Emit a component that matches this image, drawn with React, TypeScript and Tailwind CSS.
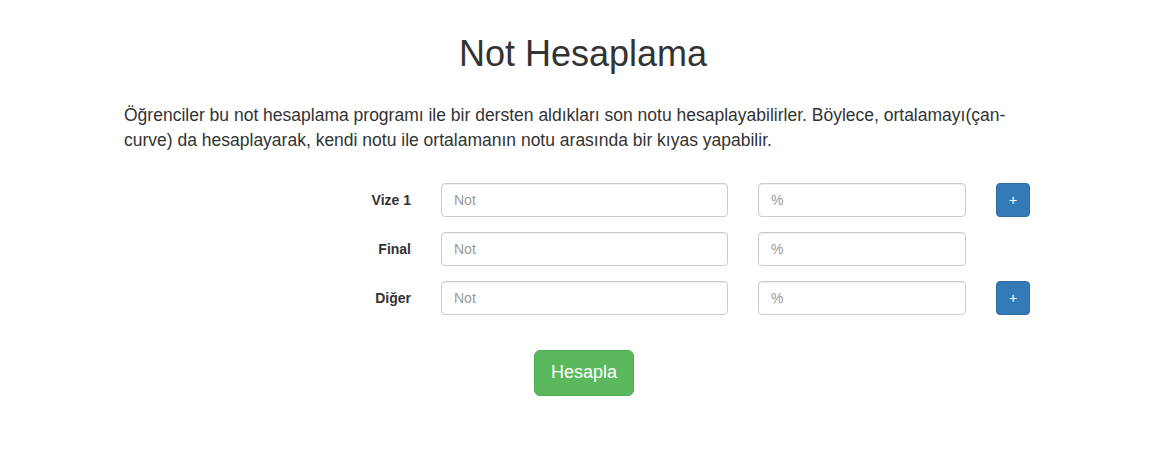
import React from "react";

const rows = [
  { label: "Vize 1", plus: true },
  { label: "Final", plus: false },
  { label: "Diğer", plus: true },
];

export default function App() {
  return (
    <div
      className="min-h-[460px] bg-white text-[#333]"
      style={{ fontFamily: "'Liberation Sans', Arial, sans-serif" }}
    >
      <div className="mx-auto w-[918px] pt-[34px]">
        <h1 className="text-center text-[36px] leading-[1.1] font-normal">Not Hesaplama</h1>
        <p className="mt-[29px] text-[17.5px] leading-[25px]">
          Öğrenciler bu not hesaplama programı ile bir dersten aldıkları son notu hesaplayabilirler. Böylece, ortalamayı(çan-curve) da hesaplayarak, kendi notu ile ortalamanın notu arasında bir kıyas yapabilir.
        </p>

        <div className="mt-[30px] flex flex-col gap-[15px]">
          {rows.map((r) => (
            <div key={r.label} className="flex items-center gap-[30px]">
              <label className="w-[287px] pt-px text-right text-[14px] font-bold">{r.label}</label>
              <input
                placeholder="Not"
                className="h-[34px] w-[287px] rounded-[4px] border border-[#ccc] px-3 text-[14px] text-[#555] shadow-[inset_0_1px_1px_rgba(0,0,0,0.075)] outline-none placeholder:text-[#999]"
              />
              <input
                placeholder="%"
                className="h-[34px] w-[208px] rounded-[4px] border border-[#ccc] px-3 text-[14px] text-[#555] shadow-[inset_0_1px_1px_rgba(0,0,0,0.075)] outline-none placeholder:text-[#999]"
              />
              {r.plus && (
                <button className="h-[34px] w-[34px] rounded-[4px] border border-[#2e6da4] bg-[#337ab7] text-[14px] leading-none text-white">
                  +
                </button>
              )}
            </div>
          ))}
        </div>

        <div className="mt-[35px] flex justify-center pl-[2px]">
          <button className="h-[46px] w-[100px] rounded-[6px] border border-[#4cae4c] bg-[#5cb85c] text-[18px] text-white">
            Hesapla
          </button>
        </div>
      </div>
    </div>
  );
}
